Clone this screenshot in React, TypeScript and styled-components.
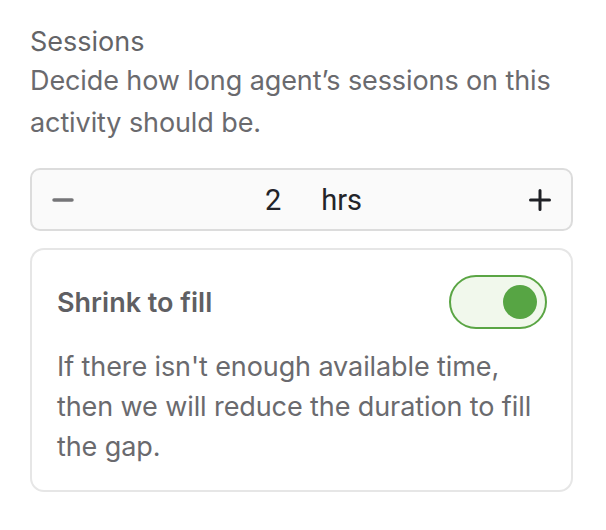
import React, { useState } from "react";
import styled, { createGlobalStyle } from "styled-components";

const Global = createGlobalStyle`
  html, body { margin: 0; padding: 0; background: #ffffff; }
  body { font-family: Inter, "Noto Sans", sans-serif; -webkit-font-smoothing: antialiased; }
  * { box-sizing: border-box; }
`;

const Panel = styled.div`
  width: 573px;
  padding: 24px 0 0 30px;
  display: flex;
  flex-direction: column;
`;

const Title = styled.div`
  font-size: 27px;
  line-height: 36px;
  font-weight: 400;
  color: #646467;
`;

const Description = styled.div`
  font-size: 27px;
  line-height: 42px;
  color: #6a6a6e;
  letter-spacing: -0.1px;
`;

const Stepper = styled.div`
  margin-top: 24px;
  height: 63px;
  border: 2px solid #dcdcdc;
  border-radius: 10px;
  background: #fafafa;
  display: flex;
  align-items: center;
  justify-content: space-between;
  padding: 0 20px;
`;

const StepButton = styled.button<{ $muted?: boolean }>`
  width: 22px;
  height: 22px;
  padding: 0;
  border: none;
  background: transparent;
  display: flex;
  align-items: center;
  justify-content: center;
  color: ${(p) => (p.$muted ? "#757578" : "#1f2025")};
  cursor: pointer;
`;

const Value = styled.div`
  display: flex;
  align-items: baseline;
  gap: 40px;
  margin-left: 24px;
  font-family: Roboto, "Liberation Sans", sans-serif;
  font-size: 29px;
  color: #232429;
`;

const Card = styled.div`
  margin-top: 17px;
  border: 2px solid #e6e6e6;
  border-radius: 14px;
  padding: 25px 24px 23px 25px;
  display: flex;
  flex-direction: column;
  gap: 18px;
`;

const CardHeader = styled.div`
  display: flex;
  align-items: center;
  justify-content: space-between;
`;

const CardTitle = styled.div`
  font-size: 27px;
  font-weight: 600;
  color: #5f5f63;
`;

const Toggle = styled.button<{ $on: boolean }>`
  width: 98px;
  height: 54px;
  border-radius: 27px;
  border: 2px solid ${(p) => (p.$on ? "#5aa544" : "#c8c8c8")};
  background: ${(p) => (p.$on ? "#f1f8ec" : "#f5f5f5")};
  padding: 0 8px;
  display: flex;
  align-items: center;
  justify-content: ${(p) => (p.$on ? "flex-end" : "flex-start")};
  cursor: pointer;
`;

const Knob = styled.span<{ $on: boolean }>`
  width: 34px;
  height: 34px;
  border-radius: 50%;
  background: ${(p) => (p.$on ? "#57a544" : "#bbbbbb")};
`;

const CardText = styled.div`
  font-size: 27px;
  line-height: 40px;
  color: #6a6a6e;
  letter-spacing: -0.1px;
`;

export default function App() {
  const [hours, setHours] = useState(2);
  const [on, setOn] = useState(true);
  return (
    <>
      <Global />
      <Panel>
        <Title>Sessions</Title>
        <Description>Decide how long agent’s sessions on this activity should be.</Description>
        <Stepper>
          <StepButton $muted onClick={() => setHours(Math.max(0, hours - 1))} aria-label="decrease">
            <svg width="22" height="22" viewBox="0 0 22 22">
              <path d="M2 11h18" stroke="currentColor" strokeWidth="3.5" strokeLinecap="round" />
            </svg>
          </StepButton>
          <Value>
            <span>{hours}</span>
            <span>hrs</span>
          </Value>
          <StepButton onClick={() => setHours(hours + 1)} aria-label="increase">
            <svg width="22" height="22" viewBox="0 0 22 22">
              <path d="M1.5 11h19M11 1.5v19" stroke="currentColor" strokeWidth="3" strokeLinecap="round" />
            </svg>
          </StepButton>
        </Stepper>
        <Card>
          <CardHeader>
            <CardTitle>Shrink to fill</CardTitle>
            <Toggle $on={on} onClick={() => setOn(!on)} aria-label="toggle">
              <Knob $on={on} />
            </Toggle>
          </CardHeader>
          <CardText>If there isn't enough available time, then we will reduce the duration to fill the gap.</CardText>
        </Card>
      </Panel>
    </>
  );
}
